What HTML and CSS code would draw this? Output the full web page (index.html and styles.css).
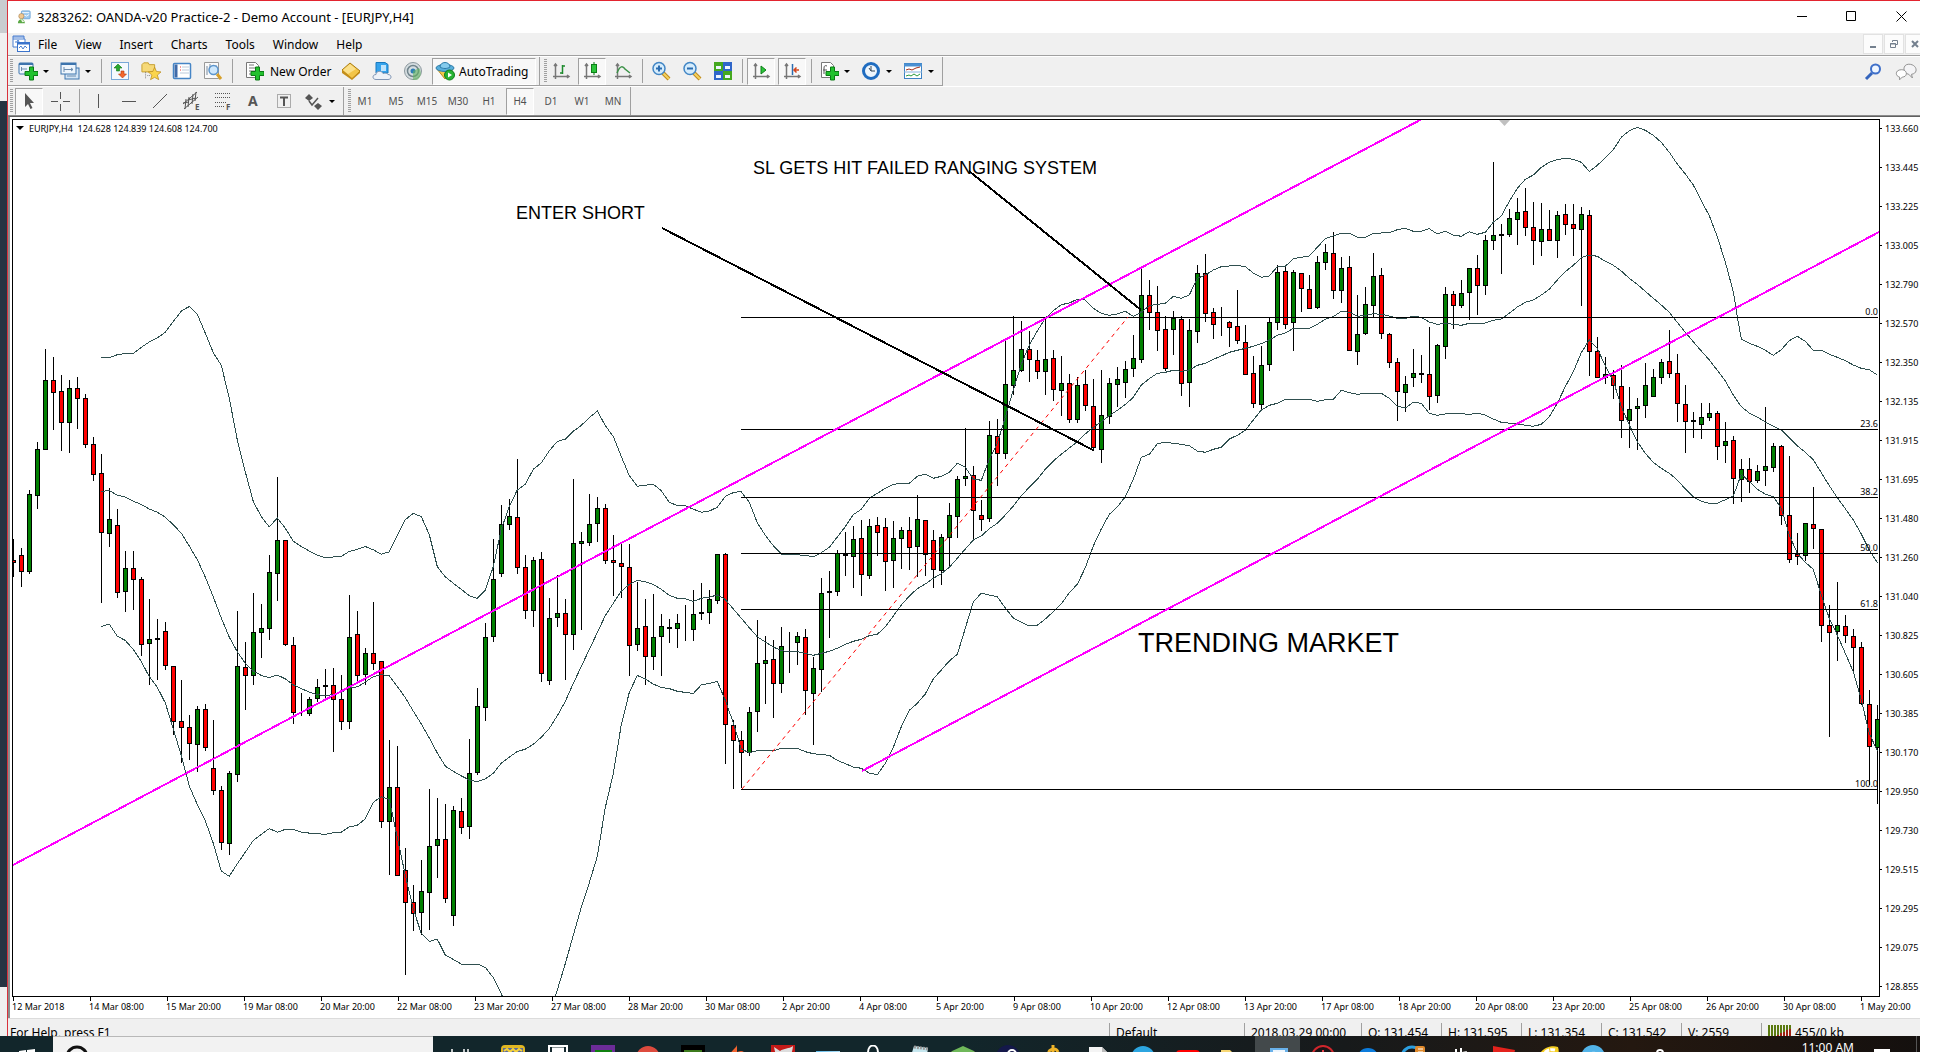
FILE: index.html
```html
<!DOCTYPE html>
<html lang="en">
<head>
    <meta charset="UTF-8">
    <meta name="viewport" content="width=device-width, initial-scale=1.0">
    <title>3283262: OANDA-v20 Practice-2 - Demo Account - [EURJPY,H4]</title>
    <link rel="stylesheet" href="styles.css">
</head>
<body>
    <div class="desktop">
        <main class="window">
            <header class="titlebar">
                <svg class="icon" viewBox="0 0 16 16"><rect x="5" y="1" width="10" height="9" rx="1" fill="#9cc8ee" stroke="#6fa5d6"/><path d="M6 3h8M7 8l2-2 2 1 3-2" stroke="#fff" fill="none"/><circle cx="5" cy="7" r="3" fill="#f0c890" stroke="#a07848" stroke-width=".6"/><path d="M1 15c0-6 8-6 8 0z" fill="#5aa845"/><path d="M4 10l2 4 3-1" fill="#e8f4e0"/></svg>
                <h1>3283262: OANDA-v20 Practice-2 - Demo Account - [EURJPY,H4]</h1>
                <div class="window-controls">
                    <button aria-label="Minimize"><svg viewBox="0 0 11 11"><path d="M0 5.5h10"/></svg></button>
                    <button aria-label="Maximize"><svg viewBox="0 0 11 11"><path d="M.5.5h9v9h-9z"/></svg></button>
                    <button aria-label="Close"><svg viewBox="0 0 11 11"><path d="M.5.5l10 10M10.5.5l-10 10"/></svg></button>
                </div>
            </header>

            <nav class="menubar">
                <svg class="menu-icon" viewBox="0 0 18 18"><path d="M1 4V1h11v3M1 4h12v8H1z" fill="#fff" stroke="#4a7fd0"/><path d="M1 2h11M3 7h2l1-2 2 4" stroke="#4a7fd0" fill="none"/><rect x="5.5" y="7.500" width="12" height="9" fill="#fff" stroke="#3b74cc"/><path d="M5 8.500h13" stroke="#3b74cc" stroke-width="2"/><path d="M7 13l2-2 2 3 2-3 2 2" stroke="#4a7fd0" fill="none"/></svg>
                <button>File</button>
                <button>View</button>
                <button>Insert</button>
                <button>Charts</button>
                <button>Tools</button>
                <button>Window</button>
                <button>Help</button>
                <div class="child-controls">
                    <button aria-label="Minimize chart"><svg viewBox="0 0 10 10"><path d="M2 8h6" stroke-width="2"/></svg></button>
                    <button aria-label="Restore chart"><svg viewBox="0 0 10 10"><path d="M3.500 3V1.500h5v4H7M1.500 4.500h5v4h-5zM1 5h6"/></svg></button>
                    <button aria-label="Close chart"><svg viewBox="0 0 10 10"><path d="M2 2l6 6M8 2l-6 6" stroke-width="2"/></svg></button>
                </div>
            </nav>

            <div class="toolbar">
                <div class="group">
                    <span class="grip"></span>
                    <button class="drop" aria-label="New chart"><svg viewBox="0 0 20 20"><rect x="1" y="2" width="14" height="11" rx="1" fill="#eef5fc" stroke="#3d74ad"/><path d="M1 3h14" stroke="#3d74ad" stroke-width="2"/><path d="M3.500 6v4M3 8h6" stroke="#6b8cae"/><path d="M11.500 6h4v4.500H20v4h-4.500V19h-4v-4.500H7v-4h4.500z" fill="#22c12e" stroke="#0a7a14"/></svg></button>
                    <button class="drop" aria-label="Profiles"><svg viewBox="0 0 20 20"><rect x="5" y="7" width="14" height="11" fill="#d4e5f5" stroke="#3d74ad"/><rect x="1" y="2" width="15" height="11" fill="#eef5fc" stroke="#3d74ad"/><path d="M1 3h15" stroke="#3d74ad" stroke-width="2"/><path d="M4 6v5M4 8.500h9M11 7l2 1.500L11 10M7 15h9" stroke="#6b8cae" fill="none"/></svg></button>
                    <span class="sep"></span>
                    <button aria-label="Market Watch"><svg viewBox="0 0 20 20"><rect x="1.500" y="1.500" width="17" height="17" fill="#f4f9fe" stroke="#78a8d8"/><path d="M8 3l4 4H9.500v3h-3V7H4z" fill="#29a82f" stroke="#14751a" stroke-width=".6"/><path d="M12.500 17l-4-4H11v-3h3v3h2.500z" fill="#f4672c" stroke="#b3380c" stroke-width=".6"/></svg></button>
                    <button aria-label="Navigator"><svg viewBox="0 0 22 20"><path d="M1 3l2-2h5l1 2h6v8H1z" fill="#f6d978" stroke="#c29a28"/><path d="M5 11v8M7 15h4" stroke="#777" stroke-dasharray="1 1"/><path d="M15 6l2 4.500 5 .5-4 3.500 1.500 5-4.500-2.500-4.500 2.500 1.500-5-4-3.500 5-.5z" fill="#fbd54b" stroke="#b98a1c" stroke-width=".8"/></svg></button>
                    <button aria-label="Terminal"><svg viewBox="0 0 20 20"><rect x="1.500" y="2.500" width="17" height="15" rx="1" fill="#fff" stroke="#4585c6" stroke-width="1.500"/><rect x="2.500" y="3.500" width="3" height="13" fill="#3f6aa8"/><path d="M8 6h1M8 9h1" stroke="#e33"/><path d="M10 6h7M10 9h7M8 12h9" stroke="#bccbdc"/></svg></button>
                    <button aria-label="Strategy Tester"><svg viewBox="0 0 20 20"><path d="M1.500 1.500h14v16h-14z" fill="#fafafa" stroke="#999"/><path d="M4 5v9M7 3v9M13 4v4" stroke="#7b8ca0"/><circle cx="10.500" cy="9" r="4.500" fill="#cfe8fc" stroke="#5c95cc" stroke-width="1.500"/><path d="M14 13l4 5" stroke="#d7a02a" stroke-width="3"/></svg></button>
                    <span class="sep"></span>
                    <button class="wide order"><svg viewBox="0 0 20 20"><path d="M2.500 1.500h9l3 3v12h-12z" fill="#fff" stroke="#777"/><path d="M5 4h5M5 7h7M5 10h6M5 13h4" stroke="#777"/><path d="M11.500 6h4v4.500H20v4h-4.500V19h-4v-4.500H7v-4h4.500z" fill="#22c12e" stroke="#0a7a14"/></svg>New Order</button>
                    <button aria-label="MetaEditor"><svg viewBox="0 0 20 20"><path d="M1 9l8-7 10 8-8 8z" fill="#f3c548" stroke="#a87a10"/><path d="M1 9v3l10 7 8-7v-2l-8 7z" fill="#c48e1a"/><path d="M9 3l6 5-8 5-5-4z" fill="#fbe08a"/></svg></button>
                    <button aria-label="Virtual Hosting"><svg viewBox="0 0 20 20"><path d="M4 1.500h9l3 2V12H4z" fill="#35a3ec" stroke="#1878be"/><path d="M9 4h5v6H9z" fill="#bfe3fb"/><path d="M4 18.500c-4 0-4-5 0-5 0-4 6-4 7-1 4-1 5 1 5 1 4 0 4 5 0 5z" fill="#eef2f8" stroke="#8296b4"/></svg></button>
                    <button aria-label="Signals"><svg viewBox="0 0 20 20"><circle cx="10" cy="10" r="8.500" fill="#d5dde0" stroke="#8c989e"/><circle cx="10" cy="10" r="5.500" fill="none" stroke="#71848c" stroke-width="1.500"/><circle cx="10" cy="10" r="2.500" fill="#2f7fb8"/><path d="M10 10v9h4c4-2 5-8 2-12z" fill="#62b45f" opacity=".6"/></svg></button>
                    <button class="wide auto pressed"><svg viewBox="0 0 20 20"><path d="M2 8l8 10 8-10z" fill="#f3c84c" stroke="#b98d1c"/><ellipse cx="10" cy="7" rx="9" ry="3.500" fill="#58aedb" stroke="#2b7ba8"/><path d="M5 6c0-6 10-6 10 0-3 2-7 2-10 0z" fill="#84cbed" stroke="#2b7ba8"/><circle cx="14.500" cy="14" r="5" fill="#27b232" stroke="#0d7e18"/><path d="M13 11.500v5l4-2.500z" fill="#fff"/></svg>AutoTrading</button>
                </div>
                <div class="group">
                    <span class="grip"></span>
                    <button aria-label="Bar chart"><svg viewBox="0 0 20 20"><path d="M4.500 3v15M2 15.500h16M3 5l1.500-2L6 5M16 14l2 1.500-2 1.500" stroke="#777" stroke-width="1.500" fill="none"/><path d="M11.500 4v9M11 5h3M9 12h3" stroke="#1d8a2d" stroke-width="1.500"/></svg></button>
                    <button class="pressed" aria-label="Candlesticks"><svg viewBox="0 0 20 20"><path d="M4.500 3v15M2 15.500h16M3 5l1.500-2L6 5M16 14l2 1.500-2 1.500" stroke="#777" stroke-width="1.500" fill="none"/><path d="M12 1v13" stroke="#0d7e18"/><rect x="9.500" y="3.500" width="5" height="8" fill="#2bc53a" stroke="#0d7e18"/></svg></button>
                    <button aria-label="Line chart"><svg viewBox="0 0 20 20"><path d="M4.500 3v15M2 15.500h16M3 5l1.500-2L6 5M16 14l2 1.500-2 1.500" stroke="#777" stroke-width="1.500" fill="none"/><path d="M4 12c3-8 6-7 8-4l5 4" stroke="#3b9147" stroke-width="1.500" fill="none"/></svg></button>
                    <span class="sep"></span>
                    <button aria-label="Zoom in"><svg viewBox="0 0 20 20"><path d="M12 12l6 6" stroke="#c08a1e" stroke-width="4"/><path d="M12 12l6 6" stroke="#f5d35e" stroke-width="2"/><circle cx="8" cy="7.500" r="6" fill="#d5ecfc" stroke="#4286c5" stroke-width="1.500"/><path d="M5 7.500h6M8 4.500v6" stroke="#2b6cb0" stroke-width="2"/></svg></button>
                    <button aria-label="Zoom out"><svg viewBox="0 0 20 20"><path d="M12 12l6 6" stroke="#c08a1e" stroke-width="4"/><path d="M12 12l6 6" stroke="#f5d35e" stroke-width="2"/><circle cx="8" cy="7.500" r="6" fill="#d5ecfc" stroke="#4286c5" stroke-width="1.500"/><path d="M5 7.500h6" stroke="#2b6cb0" stroke-width="2"/></svg></button>
                    <button aria-label="Tile windows"><svg viewBox="0 0 20 20"><path d="M1 1h9v9H1zM10 10h9v9h-9z" fill="#45a81f"/><path d="M10 1h9v9h-9zM1 10h9v9H1z" fill="#2f66c9"/><path d="M3 5h5v3H3zM12 5h5v3h-5zM3 14h5v3H3zM12 14h5v3h-5z" fill="#eef6ff"/></svg></button>
                    <span class="sep"></span>
                    <button class="pressed" aria-label="Auto scroll"><svg viewBox="0 0 20 20"><path d="M4.500 3v15M2 15.500h16M3 5l1.500-2L6 5M16 14l2 1.500-2 1.500" stroke="#777" stroke-width="1.500" fill="none"/><path d="M10 5v8l5-4z" fill="#2bc53a" stroke="#0d7e18"/></svg></button>
                    <button class="pressed" aria-label="Chart shift"><svg viewBox="0 0 20 20"><path d="M4.500 3v15M2 15.500h16M3 5l1.500-2L6 5M16 14l2 1.500-2 1.500" stroke="#777" stroke-width="1.500" fill="none"/><path d="M10.500 3v11" stroke="#2b6cb0" stroke-width="1.500"/><path d="M17 9h-5M14.500 6.500L12 9l2.500 2.500" stroke="#d2451e" stroke-width="1.500" fill="none"/></svg></button>
                    <span class="sep"></span>
                    <button class="drop" aria-label="Indicators"><svg viewBox="0 0 20 20"><path d="M2.500 1.500h9l3 3v12h-12z" fill="#fff" stroke="#777"/><path d="M8 5c-2-1-3 0-3 2v6M4 9h4" stroke="#555" fill="none"/><path d="M11.500 6h4v4.500H20v4h-4.500V19h-4v-4.500H7v-4h4.500z" fill="#22c12e" stroke="#0a7a14"/></svg></button>
                    <button class="drop" aria-label="Periods"><svg viewBox="0 0 20 20"><circle cx="10" cy="10" r="7.500" fill="#eef6fd" stroke="#1f6cc0" stroke-width="3"/><path d="M10 5v5h4M10 10l-2-3" stroke="#345" fill="none"/></svg></button>
                    <button class="drop" aria-label="Templates"><svg viewBox="0 0 20 20"><rect x="1.500" y="2.500" width="17" height="15" fill="#fff" stroke="#3d82c4"/><path d="M1 4h18" stroke="#4a90d2" stroke-width="3"/><path d="M1 11h18" stroke="#8ab4dc"/><path d="M3 9l3-1 3 1 4-2 4-1" stroke="#a5301c" fill="none"/><path d="M3 15l3-1 2 1 3-2 3 2 3-2" stroke="#2c9a3b" fill="none"/></svg></button>
                </div>
                <div class="tools-right">
                    <button aria-label="Search"><svg viewBox="0 0 20 20"><path d="M2 17l6-6" stroke="#3565bd" stroke-width="3"/><circle cx="11.500" cy="7" r="4.500" fill="#eff6ff" stroke="#3e6fc9" stroke-width="2"/></svg></button>
                    <button aria-label="Chat"><svg viewBox="0 0 24 20"><path d="M15 1.500c9 0 11 10 3 11l1 4-4-4c-7-1-7-11 0-11z" fill="#f4f4f6" stroke="#888"/><path d="M7 7.500c7 0 7 8 1 8l-3 3v-3c-5-1-5-8 2-8z" fill="#fff" stroke="#888"/></svg></button>
                </div>
            </div>

            <div class="toolbar second">
                <div class="group">
                    <span class="grip"></span>
                    <button class="pressed" aria-label="Cursor"><svg viewBox="0 0 20 20"><path d="M6 2v14l3-3 2.500 5 2-1-2.500-5h4z" fill="#555"/></svg></button>
                    <button aria-label="Crosshair"><svg viewBox="0 0 20 20"><path d="M10.500 1v7M10.500 13v7M1 10.500h7M13 10.500h7" stroke="#555"/></svg></button>
                    <span class="sep"></span>
                    <button aria-label="Vertical line"><svg viewBox="0 0 20 20"><path d="M10.500 3v14" stroke="#555"/></svg></button>
                    <button aria-label="Horizontal line"><svg viewBox="0 0 20 20"><path d="M3 10.500h14" stroke="#555"/></svg></button>
                    <button aria-label="Trendline"><svg viewBox="0 0 20 20"><path d="M3 17L17 3" stroke="#555"/></svg></button>
                    <button aria-label="Equidistant channel"><svg viewBox="0 0 20 20"><path d="M2 13L16 1M3 18L17 6M5 8l-1 10M8 6L7 16M12 3l-1 10M15 1l-1 9M2 12l6-1M7 9l8-2" stroke="#555" fill="none"/><text x="14" y="19" font-size="8" font-weight="bold" fill="#555">E</text></svg></button>
                    <button aria-label="Fibonacci retracement"><svg viewBox="0 0 20 20"><path d="M3 2.500h15M3 6.500h15M3 11.500h11M3 15.500h9" stroke="#555" stroke-dasharray="1 1"/><text x="14" y="19" font-size="8" font-weight="bold" fill="#555">F</text></svg></button>
                    <button aria-label="Text"><svg viewBox="0 0 20 20"><text x="5" y="15" font-size="14" font-weight="bold" fill="#555">A</text></svg></button>
                    <button aria-label="Text label"><svg viewBox="0 0 20 20"><rect x="3.500" y="3.500" width="13" height="13" fill="none" stroke="#666" stroke-dasharray="1 1"/><path d="M6 6.500h8M10 6v9" stroke="#555" stroke-width="2"/></svg></button>
                    <button class="drop" aria-label="Arrows"><svg viewBox="0 0 20 20"><path d="M5 3l4 4-4 3-4-3zM14 12l4 3-4 4-4-4z" fill="#555"/><path d="M5 10l3 4 6-7" stroke="#555" stroke-width="1.500" fill="none"/></svg></button>
                </div>
                <div class="group periods">
                    <span class="grip"></span>
                    <button>M1</button>
                    <button>M5</button>
                    <button>M15</button>
                    <button>M30</button>
                    <button>H1</button>
                    <button class="pressed">H4</button>
                    <button>D1</button>
                    <button>W1</button>
                    <button>MN</button>
                </div>
            </div>

            <section class="chart" aria-label="EURJPY H4 chart">
                <svg class="plot">
                    <!-- page coordinates, shifted to the plot corner -->
                    <g transform="translate(-13 -120)">
                        <path d="M1499 120h11l-5.500 6z" fill="#c0c0c0"/>
                        <g id="candles" class="candles"></g>
                        <g id="bands" class="bands"></g>
                        <g id="fibo" class="fibo"></g>
                        <path class="base-line" d="M742 789L1128 317"/>
                        <path class="channel" d="M13 865L1422 119M862 771L1879 232"/>
                        <path class="pointer" d="M662 228L1093 450M969 171L1141 310"/>
                        <path d="M16 126h8l-4 4z"/>
                        <text class="symbol" x="29" y="132">EURJPY,H4&#160; 124.628 124.839 124.608 124.700</text>
                        <text class="note" x="516" y="219">ENTER SHORT</text>
                        <text class="note" x="753" y="174">SL GETS HIT FAILED RANGING SYSTEM</text>
                        <text class="note big" x="1138" y="652">TRENDING MARKET</text>
                    </g>
                </svg>
                <ul id="prices" class="prices"></ul>
                <ul id="times" class="times"></ul>
            </section>

            <footer class="statusbar">
                <span class="help">For Help, press F1</span>
                <span class="cell profile">Default</span>
                <span class="cell time">2018.03.29 00:00</span>
                <span class="cell">O: 131.454</span>
                <span class="cell">H: 131.595</span>
                <span class="cell">L: 131.354</span>
                <span class="cell">C: 131.542</span>
                <span class="cell">V: 2559</span>
                <span class="cell traffic"><svg viewBox="0 0 24 16"><path d="M1 0v14M4 0v13M7 0v11M10 0v10M13 0v8M16 0v7M19 0v5M22 0v4" stroke="#5b7a10" stroke-width="2"/><path d="M4 13v3M7 11v5M10 10v6M13 8v8M16 7v9M19 5v11M22 4v12" stroke="#a02010" stroke-width="2"/></svg>455/0 kb</span>
            </footer>
        </main>

        <div class="taskbar">
            <button class="start" aria-label="Start"><svg viewBox="0 0 24 24"><path d="M4 6l7-1v7H4zM12 5l8-1v8h-8zM4 13h7v7l-7-1zM12 13h8v8l-8-1z" fill="#fff"/></svg></button>
            <label class="search">
                <svg viewBox="0 0 24 24"><circle cx="12" cy="12" r="10" fill="none" stroke="#111" stroke-width="3"/></svg>
                <input type="text" placeholder="Type here to search">
                <svg class="mic" viewBox="0 0 24 24"><rect x="8.500" y="5" width="7" height="13" rx="2" fill="none" stroke="#333" stroke-width="2"/></svg>
            </label>
            <button class="taskview" aria-label="Task View"><svg viewBox="0 0 24 24"><path d="M4 4v4h12V4M20 4v3M4 11h12v9H4z" fill="none" stroke="#fff" stroke-width="1.500"/></svg></button>
            <button aria-label="Game"><svg viewBox="0 0 24 24"><rect width="24" height="24" rx="4" fill="#e0b622"/><path d="M2 3h20v8H2z" fill="#5a6a9a"/><path d="M3 6l3-2 3 3 3-3 3 3 3-3 3 2" stroke="#f6d33c" stroke-width="2" fill="none"/></svg></button>
            <button aria-label="Calculator"><svg viewBox="0 0 24 24"><path d="M3 1h18v23H3z" fill="#15282e" stroke="#fff" stroke-width="2"/><path d="M6 5h12" stroke="#fff" stroke-width="5"/></svg></button>
            <button aria-label="Project"><svg viewBox="0 0 24 24"><path d="M0 0h24v24H0z" fill="#6c2c98"/><path d="M4 5h17v19H4z" fill="#108010"/><path d="M4 8h17" stroke="#d8f0d8"/></svg></button>
            <button aria-label="Chrome"><svg viewBox="0 0 24 24"><circle cx="12" cy="13" r="12" fill="#dd4b3e"/><path d="M12 9h11" stroke="#f48a80"/></svg></button>
            <button aria-label="Pixel game"><svg viewBox="0 0 24 24"><path d="M0 0h24v24H0z" fill="#000"/><path d="M3 5h18v19H3z" fill="#3c7a1c"/><path d="M3 11h4V9h4v3h4V9h3v3h3v4H3z" fill="#7a3c18"/></svg></button>
            <button aria-label="Origin"><svg viewBox="0 0 24 24"><path d="M11 0c-1 4-8 6-8 14 0 10 18 10 18 0 0-5-3-8-6-8-2 0-3 1-4 1z" fill="#f26430"/></svg></button>
            <button aria-label="Rocket"><svg viewBox="0 0 24 24"><path d="M0 0h24v24H0z" fill="#c41a18"/><path d="M3 2l6 4c4-3 9-2 13-5-1 9-4 14-9 15-5 2-8-3-10-14z" fill="#ddd"/></svg></button>
            <button aria-label="Pictures"><svg viewBox="0 0 24 24"><path d="M0 6h24v16H0z" fill="#5cb8e8"/><path d="M0 7l24-1v3L0 12z" fill="#aadcf5"/></svg></button>
            <button aria-label="Store"><svg viewBox="0 0 24 24"><path d="M7 8c0-10 10-10 10 0" fill="none" stroke="#fff" stroke-width="2"/><path d="M0 7h24v17H0z" fill="#f2f2f2"/></svg></button>
            <button aria-label="Notepad"><svg viewBox="0 0 24 24"><path d="M8 1l14 2-3 20-17-3z" fill="#c5e6ee"/><path d="M8 2l14 2" stroke="#999" stroke-width="3" stroke-dasharray="2 1"/></svg></button>
            <button aria-label="Blocks"><svg viewBox="0 0 26 24"><path d="M0 6l13-6 13 6-13 6z" fill="#6fb85a"/><path d="M0 6l13 6 13-6v14l-13 4-13-4z" fill="#7a583c"/></svg></button>
            <button aria-label="Steam"><svg viewBox="0 0 24 24"><circle cx="12" cy="12" r="12" fill="#14184a"/><circle cx="16" cy="9" r="4" fill="none" stroke="#fff" stroke-width="2"/></svg></button>
            <button aria-label="Finance"><svg viewBox="0 0 24 24"><path d="M12 0v24M17 7c-2-5-10-3-9 1 1 4 9 3 9 8 0 4-8 4-10 0" fill="none" stroke="#f0b429" stroke-width="3"/></svg></button>
            <button aria-label="Document"><svg viewBox="0 0 24 24"><path d="M3 2h13l6 6v16H3z" fill="#f4f4f4"/><path d="M16 2v6h6" fill="#bbb"/></svg></button>
            <button aria-label="Telegram"><svg viewBox="0 0 24 24"><circle cx="12" cy="13" r="12" fill="#2ca5e0"/></svg></button>
            <button aria-label="YouTube"><svg viewBox="0 0 24 24"><rect y="5" width="24" height="16" rx="4" fill="#f00"/></svg></button>
            <button aria-label="File Explorer"><svg viewBox="0 0 24 24"><path d="M0 5h9l2 2h13v15H0z" fill="#f7d774"/><path d="M10 8h14" stroke="#fff"/></svg></button>
            <button class="active" aria-label="MetaTrader"><svg viewBox="0 0 24 24"><path d="M4 3h18v14H4z" fill="#69b1ea"/><path d="M7 5h12v6H7z" fill="#eef6fd"/></svg></button>
            <button aria-label="Recorder"><svg viewBox="0 0 24 24"><circle cx="12" cy="12" r="11" fill="#1a1416" stroke="#d0262c" stroke-width="2"/><path d="M12 5v6" stroke="#e8424a" stroke-width="2"/></svg></button>
            <button aria-label="Edge"><svg viewBox="0 0 24 24"><circle cx="12" cy="14" r="11" fill="#0c7cdc"/></svg></button>
            <button aria-label="Explorer"><svg viewBox="0 0 24 24"><circle cx="11" cy="12" r="10" fill="none" stroke="#2c9fe0" stroke-width="3"/><rect x="14" y="1" width="10" height="13" rx="2" fill="#e08a2c"/><path d="M17 4h5M17 7h5" stroke="#fff"/></svg></button>
            <button aria-label="Settings"><svg viewBox="0 0 24 24"><path d="M9 4h2v3h3V3h2v4l5-1-2 5 3 3-4 4H6l-3-5 3-2-2-4 5 1z" fill="#fff"/></svg></button>
            <button aria-label="Reader"><svg viewBox="0 0 24 24"><path d="M2 1l22 4-4 19H2z" fill="#e3221c"/></svg></button>
            <button aria-label="Lemon"><svg viewBox="0 0 24 24"><path d="M1 14C5 2 16 0 22 2c3 8-4 20-14 20z" fill="#f6cf22"/><path d="M5 12c4-7 10-8 14-7" stroke="#fff" stroke-width="3" stroke-dasharray="5 1" fill="none"/></svg></button>
            <button aria-label="Browser"><svg viewBox="0 0 24 24"><circle cx="12" cy="12" r="12" fill="#52b3e8"/><path d="M7 10c3-4 6-4 10-2l-5 6z" fill="#bfe4f8"/></svg></button>
            <div class="tray">
                <svg viewBox="0 0 24 24"><circle cx="12" cy="9" r="3" fill="none" stroke="#fff" stroke-width="2"/></svg>
                <time>11:00 AM</time>
                <svg viewBox="0 0 24 24"><path d="M4 5h16v14H4z" fill="#fff"/></svg>
            </div>
        </div>
    </div>

    <script src="chart.js"></script>
</body>
</html>
```
FILE: styles.css
```css
* {
    box-sizing: border-box;
}
body {
    margin: 0;
    background: #fff;
    font-family: "Noto Sans", "Open Sans", sans-serif;
    font-size: 12px;
    color: #000;
}
button {
    padding: 0;
    border: none;
    background: none;
    font: inherit;
    color: inherit;
}
ul {
    margin: 0;
    padding: 0;
    list-style: none;
}
.desktop {
    display: flex;
    flex-direction: column;
    height: 100vh;
    margin-right: 15px;
    overflow: hidden;
    background: linear-gradient(#c9cdd0 33px, #f0f0f0 33px, #f0f0f0 101px, #263442 101px, #263442 987px, #f0f0f0 987px);
}
.window {
    display: flex;
    flex-direction: column;
    flex: 1;
    min-height: 0;
    margin-left: 7px;
    border-top: 1px solid #e3242f;
    border-left: 1px solid #d8323c;
    background: #f0f0f0;
}

/* title and menu */
.titlebar {
    display: flex;
    align-items: center;
    height: 32px;
    flex-shrink: 0;
    padding-left: 9px;
    background: #fff;
}
.titlebar .icon {
    width: 14px;
    height: 14px;
}
.titlebar h1 {
    margin: 0 auto 0 6px;
    font-size: 13px;
    font-weight: normal;
}
.window-controls {
    display: flex;
}
.window-controls button {
    width: 49px;
    height: 30px;
}
.window-controls button:last-child {
    width: 44px;
    padding-left: 7px;
}
.window-controls svg {
    width: 11px;
    height: 11px;
    fill: none;
    stroke: #000;
}
.menubar {
    display: flex;
    align-items: center;
    height: 23px;
    flex-shrink: 0;
    padding-left: 4px;
    border-bottom: 1px solid #a0a0a0;
    gap: 18px;
}
.menu-icon {
    width: 18px;
    height: 18px;
    margin-right: -10px;
}
.child-controls {
    display: flex;
    gap: 1px;
    margin-left: auto;
    margin-right: -5px;
}
.child-controls button {
    width: 20px;
    height: 20px;
    border: 1px solid #e2e2e2;
    background: #fcfcfc;
}
.child-controls svg {
    width: 10px;
    height: 10px;
    fill: none;
    stroke: #74808e;
}

/* toolbars */
.toolbar {
    display: flex;
    height: 30px;
    flex-shrink: 0;
    border-top: 1px solid #fff;
}
.toolbar.second {
    border-bottom: 1px solid #8c8c8c;
}
.group {
    display: flex;
    align-items: center;
    gap: 3px;
    padding: 0 3px 0 2px;
    border-right: 1px solid #a0a0a0;
    border-bottom: 1px solid #a0a0a0;
}
.group + .group {
    padding-left: 4px;
}
.second .group {
    border-bottom: none;
}
.grip {
    width: 3px;
    height: 24px;
    margin-right: -1px;
    background: repeating-linear-gradient(#a0a0a0 0 1px, #f0f0f0 1px 2px);
}
.group + .group .grip {
    margin-right: -3px;
}
.sep {
    width: 1px;
    height: 24px;
    margin: 0 1px 0 2px;
    background: #a0a0a0;
}
.toolbar button {
    display: flex;
    align-items: center;
    justify-content: center;
    width: 28px;
    height: 27px;
    border: 1px solid transparent;
    white-space: nowrap;
}
.toolbar svg {
    width: 20px;
    height: 20px;
    flex-shrink: 0;
}
.toolbar .drop {
    justify-content: flex-start;
    gap: 5px;
    width: 39px;
    padding-left: 2px;
}
.drop::after {
    content: "";
    border: 3px solid transparent;
    border-top-color: #000;
    border-bottom: none;
}
.toolbar .wide {
    justify-content: flex-start;
    gap: 4px;
    width: 97px;
    padding-left: 6px;
}
.toolbar .order {
    gap: 6px;
}
.toolbar .auto {
    width: 104px;
    margin-left: 2px;
    padding-left: 2px;
}
.toolbar .pressed {
    border-color: #a0a0a0 #fff #fff #a0a0a0;
    background: #f8f8f8;
}
.periods {
    font-size: 10px;
    color: #505050;
}
.tools-right {
    display: flex;
    align-items: center;
    gap: 4px;
    margin-left: auto;
}
.tools-right svg {
    width: 22px;
}

/* chart */
.chart {
    display: grid;
    grid-template: minmax(0, 1fr) 21px / minmax(0, 1fr) 40px;
    flex: 1;
    min-height: 0;
    padding: 2px 0 0 2px;
    border-top: 1px solid #606060;
    border-left: 2px solid #8c8c8c;
    background: #fff;
    font-size: 9px;
}
.plot {
    display: block;
    width: 100%;
    height: 100%;
    border: 1px solid #000;
    overflow: hidden;
}
.candles {
    shape-rendering: crispEdges;
    stroke: #000;
}
.candles .up {
    fill: #008000;
}
.candles .down {
    fill: #f00;
}
.bands {
    fill: none;
    stroke: #2f4f4f;
    shape-rendering: crispEdges;
}
.fibo line {
    stroke: #000;
    shape-rendering: crispEdges;
}
.fibo text {
    text-anchor: end;
}
.base-line {
    stroke: #f00;
    stroke-dasharray: 4 4;
}
.channel {
    stroke: #f0f;
    stroke-width: 2;
    shape-rendering: crispEdges;
}
.pointer {
    stroke: #000;
    stroke-width: 2;
    shape-rendering: crispEdges;
}
.note {
    font: 18px "Liberation Sans", Arial, sans-serif;
}
.note.big {
    font-size: 27px;
}
.prices {
    margin-top: -10px;
}
.prices li {
    display: flex;
    align-items: center;
    gap: 3px;
    height: 39px;
}
.prices li::before {
    content: "";
    width: 2px;
    height: 1px;
    background: #000;
}
.times {
    display: flex;
    grid-column: 1 / 3;
}
.times li {
    flex: 0 0 77px;
    line-height: 19px;
    white-space: nowrap;
    background: linear-gradient(#000, #000) 1px 0 / 1px 4px no-repeat;
}
.times li:last-child {
    flex-basis: 59px;
}

/* status bar, its lower edge runs under the taskbar */
.statusbar {
    display: flex;
    height: 18px;
    flex-shrink: 0;
    border-top: 1px solid #dcdcdc;
    overflow: hidden;
    white-space: nowrap;
}
.statusbar span {
    height: 24px;
    margin-top: 4px;
    line-height: 19px;
}
.help {
    flex: 1;
    padding-left: 2px;
}
.cell {
    width: 80px;
    padding-left: 6px;
    border-left: 1px solid #a0a0a0;
}
.profile {
    width: 135px;
}
.time {
    width: 117px;
}
.traffic {
    display: flex;
    gap: 3px;
    width: 159px;
}
.traffic svg {
    width: 24px;
    height: 16px;
    margin-top: 2px;
}

/* taskbar */
.taskbar {
    display: flex;
    height: 16px;
    flex-shrink: 0;
    overflow: hidden;
    background: linear-gradient(90deg, #12262b 50%, #161c1e 65%, #171a1b 70%, #241810 85%, #14100e);
    color: #fff;
}
.taskbar button {
    width: 45px;
    height: 40px;
    flex-shrink: 0;
}
.taskbar svg {
    width: 24px;
    height: 24px;
    flex-shrink: 0;
}
.taskbar button svg {
    margin-top: 5px;
}
.taskbar .start {
    width: 53px;
}
.taskbar .taskview {
    width: 57px;
    padding-right: 3px;
}
.taskbar .active {
    background: #43494b;
}
.search {
    display: flex;
    align-items: center;
    width: 380px;
    height: 40px;
    flex-shrink: 0;
    padding: 0 10px 0 12px;
    border-top: 1px solid #b8b8b8;
    background: #f2f2f2;
}
.search input {
    flex: 1;
    min-width: 0;
    padding: 0 0 0 12px;
    border: none;
    background: none;
    font: 15px "Noto Sans", sans-serif;
}
.search .mic {
    margin-top: 8px;
}
.tray {
    display: flex;
    align-items: flex-start;
    gap: 16px;
    margin-left: auto;
    margin-right: 3px;
    padding: 4px 22px 0 0;
    height: 40px;
    border-right: 1px solid #555;
}
.tray svg {
    margin-top: 4px;
}
.tray svg:first-child {
    margin-right: 114px;
}
.tray time {
    line-height: 16px;
}
```
FILE: chart.js
```javascript
// Each block: where it starts, how many units make one pixel, then
// bars as "high top bottom low" with u (up) or d (down), 8px apart.
const blocks = [
    { y: 280, k: 2.45, x: 0, bars: `635 687 692 727 d,657 675 714 751 d,515 525 714 719 u,399 415 528 560 u,171 246 415 415 u,
191 246 276 367 d,235 273 349 418 d,246 266 349 423 u,238 266 291 364 d,280 290 403 411 d,385 403 477 491 d,427 474 619 791 d,
512 587 621 653 u,563 601 766 778 d,666 707 763 812 u,666 707 734 808 d,728 734 893 920 d,782 881 891 992 u,831 879 880 978 u,
838 861 945 954 d,947 947 1081 1114 d,980 1081 1097 1181 d,1068 1097 1136 1175 d,1044 1052 1138 1204 u,1039 1052 1146 1153 d,
1080 1197 1251 1261 d,1242 1250 1378 1395 d,1203 1209 1381 1408 u,811 947 1212 1229 u,887 949 969 1053 d,769 863 969 992 u,
796 854 863 925 u,676 716 854 881 u,485 638 719 785 u,638 638 893 896 d,877 895 1060 1087 d,1014 1059 1060 1067 u,
1022 1028 1062 1067 u,979 998 1026 1033 u,955 993 995 1027 u,953 993 1028 1156 d,969 1028 1082 1102 d,772 876 1082 1099 u,
813 868 969 981 d,904 915 967 991 u,791 915 940 954 d`,
      upper: '304,190 328,190 352,183 376,180 400,180 424,165 448,152 472,142 496,128 520,102 544,76 568,65 592,84 616,130 640,178 664,209 688,290 712,392 736,470 760,543 784,580 808,605 832,583 856,608 880,640 904,653 928,664 952,674 976,680 1024,677 1048,665 1072,660 1096,653 1120,661 1144,672 1168,666',
      middle: '304,518 328,516 352,527 376,532 400,542 424,550 448,561 472,569 496,581 520,600 544,620 568,652 592,685 616,728 640,777 664,828 688,875 712,911 736,939 760,958 784,969 808,974 832,968 856,977 880,992 904,1001 928,1010 952,1016 976,1018 1000,1016 1024,1010 1048,999 1072,997 1096,985 1120,972 1144,967',
      lower: '304,849 328,843 352,873 376,883 400,905 424,935 448,972 472,998 496,1036 520,1100 544,1165 568,1240 592,1285 616,1325 640,1380 664,1448 688,1461 712,1430 736,1402 760,1373 784,1358 808,1344 832,1353 856,1346 880,1346 904,1353 928,1355 976,1358 1000,1354 1024,1353 1048,1340 1072,1336 1096,1320 1120,1280 1144,1266' },
    { y: 420, k: 2.658, x: 360, bars: `641 641 1067 1083 d,853 976 1067 1208 u,869 976 1211 1211 d,1140 1197 1283 1474 d,1237 1282 1312 1358 d,
1172 1252 1309 1368 u,981 1133 1256 1353 u,1006 1115 1131 1217 u,1023 1115 1272 1283 d,1026 1037 1317 1344 u,1006 1040 1083 1099 d,
850 939 1080 1113 u,715 761 937 942 u,542 578 764 799 u,317 424 576 589 u,226 277 408 416 u,210 256 278 291 u,106 259 392 408 d,
360 392 507 528 d,365 373 507 550 u,353 370 674 695 d,474 527 693 703 u,412 514 525 550 u,478 514 570 690 d,159 328 570 610 u,
300 323 328 557 u,199 277 326 334 u,207 235 275 323 u,224 235 374 381 d,308 373 378 467 d,330 381 389 472 d,332 392 600 680 d,
431 554 597 613 u,478 548 629 702 d,465 578 629 663 u,516 548 576 678 u,530 551 553 592 u,516 540 554 605 u,494 538 539 585 u,
452 517 557 586 u,434 511 514 531 u,454 477 512 541 u,357 357 480 488 u,354 357 809 914 d,800 812 852 980 d`,
      upper: '112,307 136,265 160,248 184,257 208,305 232,390 256,417 280,434 304,450 328,467 352,474 376,452 400,390 424,290 448,230 472,186 496,171 520,131 544,114 568,82 592,57 616,51 640,30 664,14 688,-6 712,-24 736,15 760,44 784,97 808,148 832,176 880,171 904,188 928,219 952,227 976,228 1000,237 1024,245 1048,242 1072,232 1096,203 1120,193 1143,190',
      middle: '88,680 112,708 136,738 160,774 184,808 208,845 232,885 256,920 280,934 304,946 328,957 352,961 376,954 400,939 424,912 448,896 472,881 496,875 520,862 544,843 568,820 592,786 616,748 640,700 664,655 688,610 712,565 736,520 760,487 784,455 808,437 832,426 856,430 880,437 904,450 928,466 952,474 976,475 1000,482 1024,474 1048,471 1072,465 1096,477 1120,502',
      lower: '88,1009 112,1110 136,1210 160,1300 184,1365 208,1386 232,1380 256,1422 280,1434 304,1446 352,1446 376,1455 400,1482 424,1525 448,1580 560,1600 592,1515 616,1445 640,1370 664,1295 688,1230 712,1160 736,1030 760,940 784,810 808,724 832,679 856,688 880,702 904,711 928,714 952,721 976,724 1000,727 1024,704 1048,700 1072,695 1096,745 1120,805 1144,875' },
    { y: 300, k: 3, x: 740, bars: `1293 1321 1357 1463 d,1221 1237 1358 1367 u,960 1090 1235 1293 u,1010 1081 1091 1209 u,1020 1078 1151 1251 d,
981 1039 1151 1178 u,996 1027 1028 1118 u,996 1009 1028 1094 u,987 1012 1171 1242 d,1071 1105 1181 1332 u,834 880 1108 1174 u,
813 875 877 1011 u,751 760 875 887 u,696 763 766 825 u,678 718 769 861 u,660 715 823 887 d,657 679 826 836 u,651 676 697 765 d,
654 682 784 872 d,663 715 781 861 u,682 691 715 804 u,651 691 742 807 d,585 658 739 830 u,661 661 763 825 d,690 721 808 863 d,
702 712 811 852 u,609 646 712 803 u,529 538 649 711 u,384 529 535 557 u,498 526 631 717 d,600 646 658 692 d,363 406 655 665 u,
357 409 460 555 d,123 253 460 476 u,48 211 256 284 u,63 148 211 214 u,93 148 178 245 d,150 181 214 234 d,55 178 214 284 u,
150 175 268 302 d,168 250 271 345 u,222 250 358 368 d,231 256 358 368 u,210 253 316 332 d,237 319 442 452 d,210 346 448 488 u,
234 250 349 371 u,201 238 253 320 u,183 208 247 291 u,105 175 205 230 u`,
      upper: '28,607 52,668 76,706 100,737 124,762 196,766 220,771 244,758 268,742 292,711 316,680 340,644 364,628 388,595 412,580 436,565 460,553 484,550 508,550 532,529 556,522 580,535 604,529 628,517 652,490 676,502 700,537 724,541 748,478 772,430 796,352 820,270 844,193 868,135 892,93 916,55 940,32 964,14 988,9 1012,-2 1036,0 1060,25 1084,40 1108,46 1132,42 1156,34',
      middle: '4,955 28,983 52,1010 76,1026 100,1041 124,1052 148,1055 172,1055 196,1060 220,1066 244,1060 268,1054 292,1045 316,1033 340,1024 364,1018 388,1007 412,1003 436,980 460,948 484,915 508,888 532,866 556,852 580,835 604,821 628,802 652,775 676,747 700,720 724,708 748,686 772,670 796,645 820,618 844,587 868,562 892,538 916,508 940,483 964,463 988,444 1012,425 1036,402 1060,382 1084,365 1108,347 1132,331 1156,313',
      lower: '28,1358 52,1352 76,1350 100,1353 124,1345 172,1345 196,1355 220,1361 268,1366 292,1381 316,1391 340,1401 364,1405 388,1419 412,1424 436,1390 460,1342 484,1280 508,1231 532,1210 556,1182 580,1137 604,1110 628,1083 652,1063 676,985 700,905 724,880 748,885 772,890 796,924 820,954 844,966 868,978 892,976 916,957 940,935 964,912 988,878 1012,853 1036,803 1060,738 1084,687 1108,643 1132,621 1156,590 1180,538' },
    { y: 210, k: 3, x: 1120, bars: `171 256 448 458 u,210 256 307 359 d,228 307 361 422 d,318 358 475 482 d,303 325 358 434 u,319 328 520 557 d,
327 361 517 590 u,165 190 364 398 u,132 190 311 335 d,294 307 343 386 d,291 340 341 377 u,334 337 352 410 d,240 349 391 401 d,
345 397 493 494 d,438 490 580 593 d,408 466 583 597 u,323 337 463 482 u,165 187 337 359 u,171 184 343 356 d,180 187 337 422 u,
190 190 235 305 d,195 238 295 295 d,138 157 292 296 u,102 127 157 179 u,66 130 241 266 d,141 175 241 278 u,138 172 421 422 d,
255 373 424 464 u,231 283 370 374 u,129 199 286 318 u,174 196 370 386 d,369 373 457 473 d,444 457 544 632 d,498 523 547 605 u,
417 490 502 530 u,435 490 493 518 u,351 493 559 597 d,402 406 556 578 u,231 253 409 446 u,243 253 286 356 d`,
      upper: '16,304 40,319 64,307 88,287 112,283 136,280 160,259 184,265 208,255 232,205 256,195 280,180 304,170 352,166 376,170 400,189 424,202 448,198 472,170 496,169 520,146 568,138 592,112 616,86 640,78 664,70 688,70 712,82 736,82 760,70 808,68 832,59 856,55 880,64 904,64 928,56 952,72 976,64 1000,75 1024,79 1048,65 1072,73',
      middle: '16,584 40,562 64,525 88,506 112,490 136,487 160,481 184,484 208,480 232,466 256,460 280,448 304,438 328,427 352,421 376,415 400,409 424,401 448,390 472,376 496,369 520,355 568,355 592,343 616,328 640,320 664,304 688,307 712,319 736,316 760,311 784,313 808,318 832,325 856,325 880,319 904,322 928,336 952,343 976,340 1000,343 1024,346 1048,340 1072,342 1096,339 1120,331',
      lower: '64,742 88,733 112,701 136,697 160,700 184,703 208,707 232,723 256,727 280,718 304,712 328,687 352,676 376,661 400,630 424,600 448,586 472,580 496,568 568,568 592,574 616,569 640,568 664,541 688,548 712,553 736,550 784,550 808,565 832,589 856,594 880,577 904,580 928,610 952,616 976,612 1000,610 1048,613 1072,610' },
    { y: 110, k: 3, x: 1450, bars: `510 550 586 593 u,475 475 547 627 u,435 475 526 614 d,375 391 526 554 u,156 376 391 419 u,342 373 376 491 u,
297 325 373 380 u,264 307 328 404 u,234 304 352 377 d,276 352 391 464 d,279 358 394 437 u,300 358 391 391 d,303 316 391 443 u,
282 313 343 374 d,282 343 355 437 d,291 313 358 587 u,300 316 724 797 d,681 724 802 803 d,741 793 802 821 u,780 796 826 866 d,
765 829 931 983 d,831 898 931 1013 u,864 889 895 1019 u,759 826 886 923 u`,
      upper: '106,367 130,337 154,318 178,274 202,235 226,208 250,195 274,172 298,157 322,149 346,145 370,148 394,157 418,184 442,166 466,143 490,119 514,82 538,62 562,52 586,61 610,76 634,97 658,127 682,162 706,192 730,225 754,272 778,317 802,380 826,456 850,545 862,620',
      middle: '154,627 178,610 202,591 226,577 250,570 274,555 298,538 322,510 346,485 370,466 394,443 418,435 442,439 466,454 490,466 514,483 538,505 562,523 586,544 610,565 634,585 658,607 682,637 706,667 730,695 754,723 778,750 802,781 826,813 850,855',
      lower: '106,915 130,927 154,937 202,942 250,949 274,943 298,920 322,880 346,830 370,785 394,728 418,690 442,715 466,768 490,812 514,890 538,945 562,995 586,1030 610,1057 634,1075 658,1090 682,1110 706,1137 730,1160 754,1174 778,1180 802,1180 826,1169 850,1158' },
    { y: 320, k: 3, x: 1640, bars: `147 172 229 230 u,117 127 172 191 u,30 124 160 173 d,102 160 250 305 d,195 253 304 398 d,276 301 304 353 u,
249 292 313 356 u,249 280 292 302 u,273 280 379 419 d,306 364 376 426 u,348 361 475 551 d,417 448 478 545 u,414 448 484 518 d,
435 454 481 488 u,261 440 451 497 u,369 379 442 455 u,375 379 586 614 d,408 586 718 728 d,639 703 709 734 d,610 610 706 722 u,
501 613 625 686 d,628 628 916 965 d,855 916 937 1250 d,786 916 934 1020 u,885 919 946 968 d,927 949 982 1053 d,
966 982 1151 1154 d,1110 1153 1279 1393 d,1155 1198 1282 1451 u`,
      upper: '304,57 328,70 352,79 376,91 400,106 424,89 448,62 472,49 496,64 520,91 544,91 568,103 592,112 616,122 640,135 664,145 688,149 712,165',
      middle: '304,260 328,279 352,291 376,306 400,318 424,330 448,353 472,377 496,397 520,419 544,458 568,497 592,533 616,566 640,600 664,642 688,690 712,728',
      lower: '304,463 328,484 352,508 376,522 400,530 424,565 448,645 472,700 496,727 520,748 544,825 568,895 592,945 616,1000 640,1055 664,1140 688,1240 712,1293' }
];

let candles = '';
let x = 13;
blocks.forEach(block => {
    block.bars.split(',').forEach(bar => {
        const parts = bar.trim().split(' ');
        const [high, top, bottom, low] = parts.slice(0, 4).map(v => Math.floor(block.y + v / block.k));
        const type = parts[4] === 'u' ? 'up' : 'down';
        candles += `<path d="M${x + 0.5} ${high}V${low + 1}"/>`;
        candles += `<rect class="${type}" x="${x - 1.5}" y="${top + 0.5}" width="4" height="${bottom - top}"/>`;
        x += 8;
    });
});
document.getElementById('candles').innerHTML = candles;

const bands = ['upper', 'middle', 'lower'].map(name => {
    const points = blocks.map(block => block[name].split(' ').map(p => {
        const [px, py] = p.split(',');
        return (block.x + px / 3).toFixed(1) + ',' + (block.y + py / block.k).toFixed(1);
    }).join(' ')).join(' ');
    return `<polyline points="${points}"/>`;
});
document.getElementById('bands').innerHTML = bands.join('');

const levels = [['0.0', 317], ['23.6', 429], ['38.2', 497], ['50.0', 553], ['61.8', 609], ['100.0', 789]];
document.getElementById('fibo').innerHTML = levels.map(([label, y]) =>
    `<line x1="741" y1="${y + 0.5}" x2="1878" y2="${y + 0.5}"/><text x="1878" y="${y - 2}">${label}</text>`
).join('');

const prices = ['133.660', '133.445', '133.225', '133.005', '132.790', '132.570', '132.350', '132.135',
    '131.915', '131.695', '131.480', '131.260', '131.040', '130.825', '130.605', '130.385', '130.170',
    '129.950', '129.730', '129.515', '129.295', '129.075', '128.855'];
document.getElementById('prices').innerHTML = prices.map(p => `<li>${p}</li>`).join('');

const times = ['12 Mar 2018', '14 Mar 08:00', '15 Mar 20:00', '19 Mar 08:00', '20 Mar 20:00', '22 Mar 08:00',
    '23 Mar 20:00', '27 Mar 08:00', '28 Mar 20:00', '30 Mar 08:00', '2 Apr 20:00', '4 Apr 08:00',
    '5 Apr 20:00', '9 Apr 08:00', '10 Apr 20:00', '12 Apr 08:00', '13 Apr 20:00', '17 Apr 08:00',
    '18 Apr 20:00', '20 Apr 08:00', '23 Apr 20:00', '25 Apr 08:00', '26 Apr 20:00', '30 Apr 08:00', '1 May 20:00'];
document.getElementById('times').innerHTML = times.map(t => `<li>${t}</li>`).join('');
```
